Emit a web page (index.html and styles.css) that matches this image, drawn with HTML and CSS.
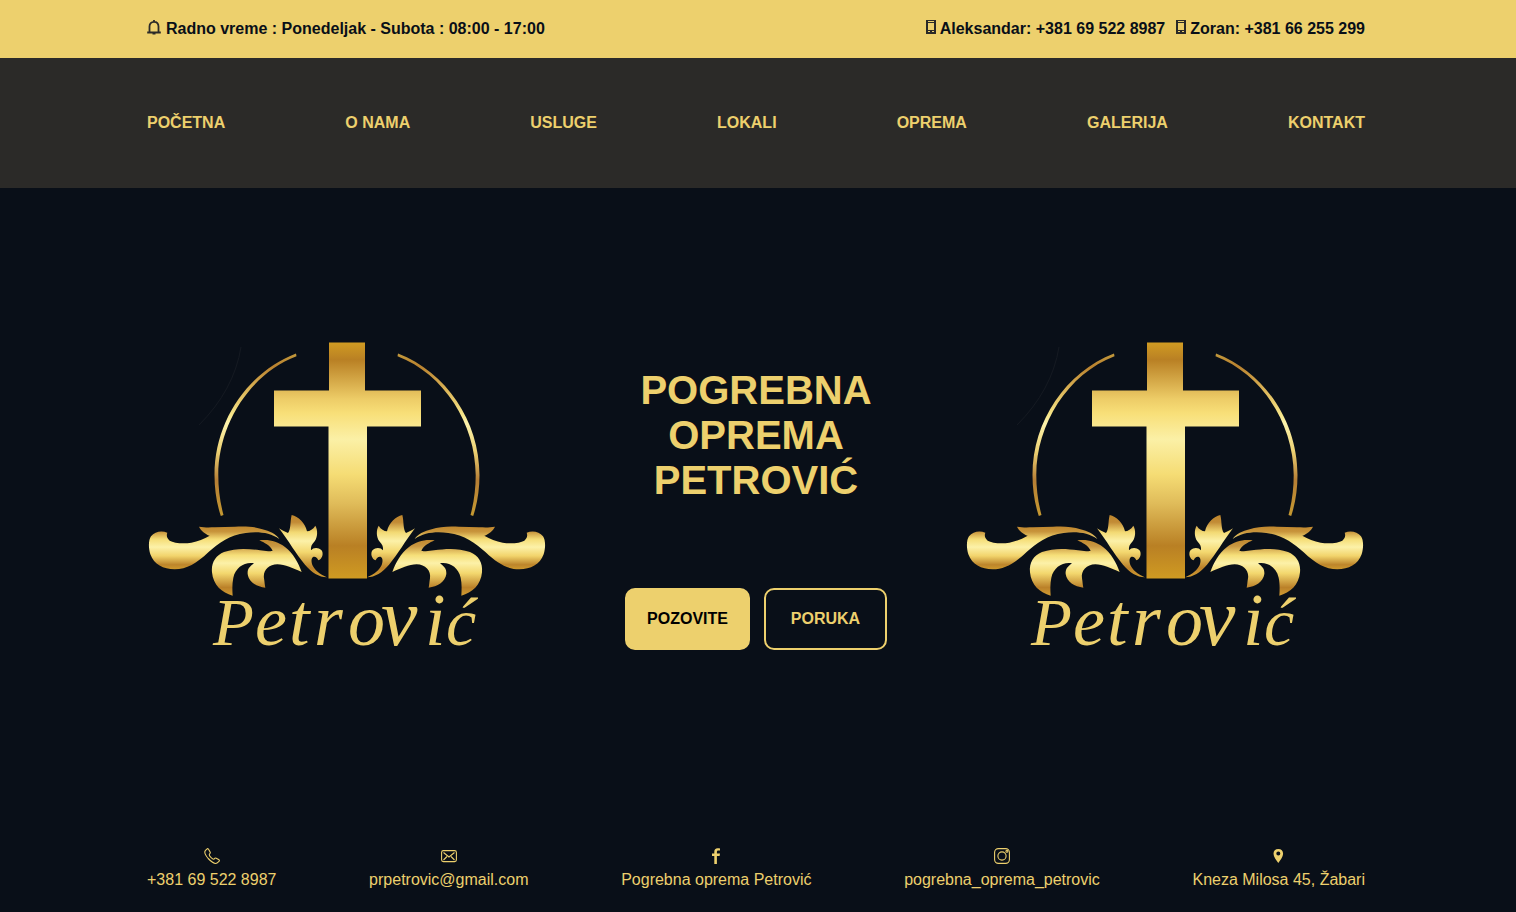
FILE: index.html
```html
<!DOCTYPE html>
<html lang="sr">
<head>
<meta charset="utf-8">
<title>Pogrebna oprema Petrović</title>
<link rel="stylesheet" href="styles.css">
</head>
<body>
<svg class="defs" width="0" height="0" aria-hidden="true">
  <defs>
    <linearGradient id="gold-cross" gradientUnits="userSpaceOnUse" x1="0" y1="342" x2="0" y2="579">
      <stop offset="0" stop-color="#d19c22"/><stop offset=".075" stop-color="#b98024"/><stop offset=".24" stop-color="#edcc67"/><stop offset=".3" stop-color="#f8df78"/><stop offset=".41" stop-color="#fbf0a6"/><stop offset=".56" stop-color="#f5dc74"/><stop offset=".68" stop-color="#e0bc5a"/><stop offset=".86" stop-color="#b98024"/><stop offset="1" stop-color="#d09b22"/>
    </linearGradient>
    <linearGradient id="gold-arc" gradientUnits="userSpaceOnUse" x1="0" y1="353" x2="0" y2="516">
      <stop offset="0" stop-color="#c39b3d"/><stop offset=".08" stop-color="#b9822f"/><stop offset=".22" stop-color="#dab255"/><stop offset=".38" stop-color="#f7e689"/><stop offset=".43" stop-color="#fdf3ac"/><stop offset=".6" stop-color="#edd274"/><stop offset=".78" stop-color="#b77f35"/><stop offset="1" stop-color="#c59931"/>
    </linearGradient>
    <linearGradient id="gold-a" gradientUnits="userSpaceOnUse" x1="0" y1="78" x2="0" y2="210">
      <stop offset="0" stop-color="#c0862c"/><stop offset=".13" stop-color="#c8953c"/><stop offset=".3" stop-color="#f5dd77"/><stop offset=".48" stop-color="#fcf1a8"/><stop offset=".68" stop-color="#f2d46c"/><stop offset=".88" stop-color="#bd852b"/><stop offset="1" stop-color="#cf9b2d"/>
    </linearGradient>
    <linearGradient id="gold-b" gradientUnits="userSpaceOnUse" x1="0" y1="118" x2="0" y2="288">
      <stop offset="0" stop-color="#bf872c"/><stop offset=".12" stop-color="#c99742"/><stop offset=".28" stop-color="#f6df79"/><stop offset=".42" stop-color="#fcf1a8"/><stop offset=".6" stop-color="#f3d76e"/><stop offset=".85" stop-color="#bb8129"/><stop offset="1" stop-color="#d09c32"/>
    </linearGradient>
    <linearGradient id="gold-c" gradientUnits="userSpaceOnUse" x1="0" y1="44" x2="0" y2="232">
      <stop offset="0" stop-color="#bf872c"/><stop offset=".12" stop-color="#c28b36"/><stop offset=".28" stop-color="#f2d973"/><stop offset=".42" stop-color="#fcf1a8"/><stop offset=".6" stop-color="#f3d76e"/><stop offset=".85" stop-color="#bb8129"/><stop offset="1" stop-color="#d09c32"/>
    </linearGradient>
    <g id="half">
      <path fill="url(#gold-arc)" d="M296 353.500C248 372 214.500 421 214.500 475C214.500 489 216.500 503 220.800 516L223.500 515C220 502 218.300 489 218.300 475C218.300 424 250 374 296.500 356.300Z"/>
      <g transform="translate(140 500) scale(.33333)">
        <path fill="url(#gold-a)" d="M82 98C64 91 44 95 33 109C25 121 25 143 31 163C42 194 70 208 104 208C140 208 170 190 205 157C235 130 269 105 317 99C355 94 391 98 418 117C407 101 389 94 367 88C345 79 310 78 285 80L225 82C207 82 194 83 177 80C183 92 196 103 209 107C192 117 174 124 154 128C127 133 101 128 89 122C80 115 79 106 82 98Z"/>
        <path fill="url(#gold-b)" d="M358 121C385 117 412 123 435 141C460 160 475 188 485 216C460 205 435 193 412 193C386 193 368 213 372 235C374 247 374 255 376 263C350 260 326 246 323 222C322 207 328 201 342 190C315 185 287 201 280 233C276 252 277 271 278 287C246 279 219 255 216 217C213 188 227 166 252 156C289 143 326 146 360 151C373 153 386 155 398 152C390 136 373 128 358 121Z"/>
        <path fill="url(#gold-c)" d="M455 45C475 50 495 67 501 94C510 93 519 88 526 77C534 91 533 111 524 124C514 134 512 142 513 151C519 142 535 141 544 150C552 160 547 177 535 181C531 173 527 169 519 171C513 175 513 188 519 199C529 217 547 226 561 232C537 231 515 218 495 194C466 160 448 125 417 85C427 91 436 96 444 99C453 88 450 65 455 45Z"/>
      </g>
    </g>
    <g id="logo">
      <path fill="none" stroke="#151a22" d="M241 347Q234 390 199 425"/>
      <path fill="url(#gold-cross)" d="M329 342.500H365V390.500H421V426.500H367V578.500H328.500V426.500H274V390.500H329Z"/>
      <use href="#half"/>
      <use href="#half" transform="translate(694 0) scale(-1 1)"/>
      <text class="logo-name" y="645" x="213 255 289 314 348 381 425 446"><tspan class="logo-cap">P</tspan><tspan class="logo-round">e</tspan>tro<tspan class="logo-wide">v</tspan>i<tspan class="logo-last">ć</tspan></text>
    </g>
    <symbol id="phone-device" viewBox="0 0 10 14"><path fill-rule="evenodd" d="M0 0H10V14H0ZM2 1V2H8V1ZM2 3V10H8V3ZM2 11V12H4V11ZM6 11V12H8V11Z"/></symbol>
  </defs>
</svg>

<header>
  <div class="topbar">
    <div class="info"><svg class="bell" width="14" height="15" viewBox="0 0 14 15"><path d="M.2 12.500H13.800M2.500 12V6.500C2.500 3.500 4.200 1.800 7 1.800S11.500 3.500 11.500 6.500V12M7 0V2M5.500 13.700H8.500"/></svg><span>Radno vreme : Ponedeljak - Subota : 08:00 - 17:00</span></div>
    <div class="contacts">
      <div class="info device"><svg width="10" height="14"><use href="#phone-device"/></svg><span>Aleksandar: +381 69 522 8987</span></div>
      <div class="info device"><svg width="10" height="14"><use href="#phone-device"/></svg><span>Zoran: +381 66 255 299</span></div>
    </div>
  </div>
  <nav class="nav">
    <a>POČETNA</a><a>O NAMA</a><a>USLUGE</a><a>LOKALI</a><a>OPREMA</a><a>GALERIJA</a><a>KONTAKT</a>
  </nav>
</header>

<main class="hero">
  <svg class="logo" width="400" height="310" viewBox="147 340 400 310"><use href="#logo"/></svg>
  <div class="intro">
    <h1>POGREBNA<br>OPREMA<br>PETROVIĆ</h1>
    <div class="actions"><a class="btn filled">POZOVITE</a><a class="btn outline">PORUKA</a></div>
  </div>
  <svg class="logo" width="400" height="310" viewBox="147 340 400 310"><use href="#logo"/></svg>
</main>

<footer class="footer">
  <div class="item">
    <svg width="16" height="16" viewBox="0 0 16 16"><path class="line" d="M3.200 .8L1.500 2.300C.2 3.700 1.200 7 4.200 10.500C7.500 14 11.300 16 13 15.100L15.200 13.200C15.700 12.500 15.300 12 14.600 11.500L12.200 10.200C11.300 9.800 10.700 10.200 10.100 11C9.300 11.600 8.200 10.700 6.900 9.400C5.600 8 4.900 6.800 5.500 6C6.300 5.500 6.500 4.900 6.100 4.100L4.700 1.500C4.300 .7 3.700 .4 3.200 .8Z"/></svg>
    <span>+381 69 522 8987</span>
  </div>
  <div class="item">
    <svg width="16" height="16" viewBox="0 0 16 16"><rect class="line" x=".6" y="2.600" width="14.800" height="11" rx="1.800"/><path class="line" d="M2.500 4.500L8 9L13.500 4.500M2.500 12L6 8.500M13.500 12L10 8.500"/></svg>
    <span>prpetrovic@gmail.com</span>
  </div>
  <div class="item">
    <svg width="16" height="16" viewBox="0 0 16 16"><path class="solid" d="M6.300 16V8.100H4V5.600H6.300V3.700C6.300 1.400 7.500 .2 9.600 .2C10.700 .2 11.600 .3 12 .4V2.500H10.400C9.200 2.500 8.900 3.200 8.900 4V5.600H12L11.600 8.100H8.900V16Z"/></svg>
    <span>Pogrebna oprema Petrović</span>
  </div>
  <div class="item">
    <svg width="16" height="16" viewBox="0 0 16 16"><rect class="line" x=".6" y=".6" width="14.800" height="14.800" rx="3.800"/><circle class="line" cx="8" cy="8" r="4.100"/><circle class="line" cx="12.900" cy="3.200" r="1"/></svg>
    <span>pogrebna_oprema_petrovic</span>
  </div>
  <div class="item">
    <svg width="16" height="16" viewBox="0 0 16 16"><path class="solid" fill-rule="evenodd" d="M7.300 1C4.300 1 2.500 3 2.500 5.700C2.500 8.800 5.300 12 7.300 15C9.300 12 12.100 8.800 12.100 5.700C12.100 3 10.300 1 7.300 1ZM7.300 3.600A2 2 0 1 1 7.300 7.600A2 2 0 1 1 7.300 3.600Z"/></svg>
    <span>Kneza Milosa 45, Žabari</span>
  </div>
</footer>
</body>
</html>
```
FILE: styles.css
```css
* { box-sizing: border-box; }
body {
  margin: 0;
  height: 912px;
  display: flex;
  flex-direction: column;
  overflow: hidden;
  background: #090f18;
  color: #edd06d;
  font: 16px/24px "Liberation Sans", Arial, sans-serif;
}
.defs { display: block; height: 0; flex: none; }
.topbar, .nav, .footer {
  display: flex;
  justify-content: space-between;
  padding: 0 151px 0 147px;
}
.topbar {
  height: 58px;
  align-items: center;
  background: #edd06d;
  color: #090f18;
  font-weight: 700;
}
.contacts { display: flex; gap: 11px; }
.info { display: flex; align-items: center; gap: 5px; }
.device { gap: 4px; }
.info svg { fill: #2b2a28; margin-bottom: 4px; }
.info .bell { fill: none; stroke: #2b2a28; stroke-width: 1.8; }
.nav {
  height: 130px;
  align-items: center;
  background: #2b2a28;
  font-weight: 700;
}
.hero {
  flex: 1;
  display: flex;
  justify-content: space-between;
  padding: 152px 151px 0 147px;
}
.logo { display: block; flex: none; }
.logo-name { font: italic 74px "Liberation Serif", serif; fill: #edd06d; }
.logo-cap { font-size: 67px; }
.logo-round { font-size: 72px; }
.logo-wide { font-size: 82px; }
.logo-last { font-size: 68px; }
.intro { display: flex; flex-direction: column; align-items: center; padding-top: 28px; }
h1 { margin: 0; font-size: 40px; line-height: 45px; text-align: center; }
.actions { display: flex; gap: 14px; margin-top: 85px; }
.btn {
  height: 62px;
  display: flex;
  align-items: center;
  justify-content: center;
  border: 2px solid #edd06d;
  border-radius: 10px;
  font-weight: 700;
}
.filled { width: 125px; background: #edd06d; color: #000; }
.outline { width: 123px; }
.footer { height: 64px; flex: none; }
.item { display: flex; flex-direction: column; align-items: center; }
.item svg { display: block; margin-bottom: 4px; }
.line { fill: none; stroke: #edd06d; stroke-width: 1.1; }
.solid { fill: #edd06d; }
```
